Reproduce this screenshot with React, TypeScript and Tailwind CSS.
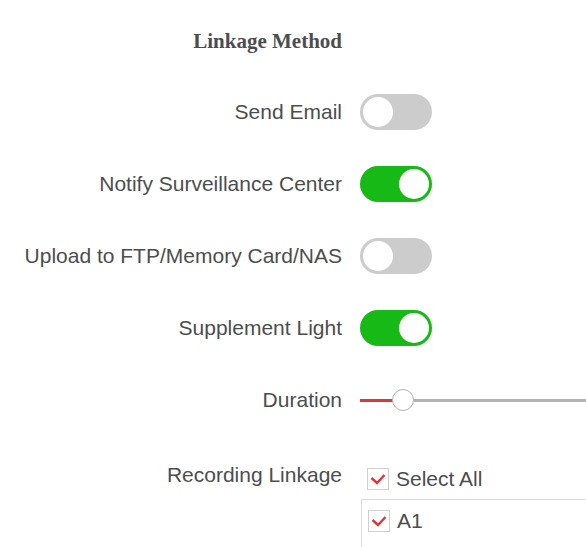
import React, { useState } from 'react';

const Toggle: React.FC<{ on: boolean; onClick: () => void }> = ({ on, onClick }) => (
  <button
    onClick={onClick}
    className={`relative w-[72px] h-[36px] rounded-full shrink-0 ${on ? 'bg-[#16b916]' : 'bg-[#cccccc]'}`}
  >
    <span
      className={`absolute top-[3px] w-[30px] h-[30px] rounded-full bg-white ${on ? 'left-[39px]' : 'left-[3px]'}`}
    />
  </button>
);

const Check: React.FC<{ checked: boolean }> = ({ checked }) => (
  <span className="w-[22px] h-[22px] border border-[#cfcfcf] bg-white flex items-center justify-center shrink-0">
    {checked && (
      <svg width="16" height="12" viewBox="0 0 16 12" fill="none">
        <path d="M1.5 5 L7 10 L14.5 2" stroke="#e0353b" strokeWidth="2.4" />
      </svg>
    )}
  </span>
);

const labelCls = 'w-[342px] text-right shrink-0 text-[21px] leading-[24px] text-[#4d4d4d]';

export default function App() {
  const [email, setEmail] = useState(false);
  const [center, setCenter] = useState(true);
  const [ftp, setFtp] = useState(false);
  const [light, setLight] = useState(true);

  const rows = [
    { label: 'Send Email', on: email, set: () => setEmail(!email) },
    { label: 'Notify Surveillance Center', on: center, set: () => setCenter(!center) },
    { label: 'Upload to FTP/Memory Card/NAS', on: ftp, set: () => setFtp(!ftp) },
    { label: 'Supplement Light', on: light, set: () => setLight(!light) },
  ];

  return (
    <div className="w-[586px] h-[547px] overflow-hidden bg-white" style={{ fontFamily: '"Liberation Sans", Arial, sans-serif' }}>
      <div className="h-[76px] flex items-center">
        <div
          className="w-[342px] text-right text-[21px] leading-[24px] font-bold text-[#4d4d4d] pt-[6px]"
          style={{ fontFamily: '"Liberation Serif", "Times New Roman", serif' }}
        >
          Linkage Method
        </div>
      </div>

      {rows.map((r) => (
        <div key={r.label} className="h-[72px] flex items-center gap-[18px]">
          <div className={labelCls}>{r.label}</div>
          <Toggle on={r.on} onClick={r.set} />
        </div>
      ))}

      {/* Duration */}
      <div className="h-[72px] flex items-center gap-[18px]">
        <div className={labelCls}>Duration</div>
        <div className="relative flex-1 h-[22px] flex items-center">
          <div className="w-[33px] h-[3px] bg-[#e0353b]" />
          <div className="w-[22px] h-[22px] rounded-full border border-[#b3b3b3] bg-white shrink-0 -ml-[1px]" />
          <div className="flex-1 h-[3px] bg-[#b3b3b3]" />
        </div>
      </div>

      {/* Recording Linkage */}
      <div className="flex gap-[18px] pt-[27px]">
        <div className={labelCls}>Recording Linkage</div>
        <div className="flex-1 pt-[5px]">
          <div className="flex items-center gap-[7px] pl-[7px] h-[22px] text-[21px] text-[#4d4d4d]">
            <Check checked />
            <span>Select All</span>
          </div>
          <div className="mt-[9px] ml-[1px] border-l border-t border-[#dddddd] h-[80px] pt-[10px] pl-[6px]">
            <div className="flex items-center gap-[7px] h-[22px] text-[21px] text-[#4d4d4d]">
              <Check checked />
              <span>A1</span>
            </div>
          </div>
        </div>
      </div>
    </div>
  );
}
